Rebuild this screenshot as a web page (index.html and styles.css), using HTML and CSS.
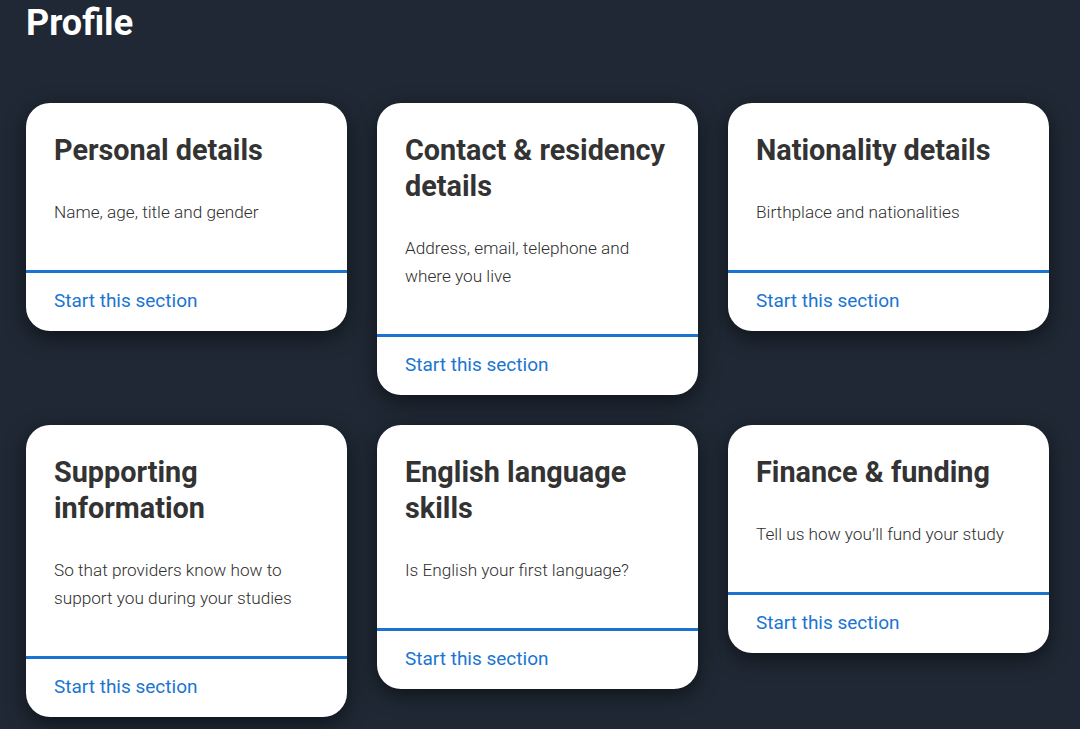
FILE: index.html
```html
<!DOCTYPE html>
<html lang="en">
<head>
<meta charset="utf-8">
<title>Profile</title>
<link rel="stylesheet" href="styles.css">
</head>
<body>
<main class="page">
  <h1 class="page-title">Profile</h1>
  <section class="grid">
    <article class="card">
      <div class="card-body">
        <h2 class="card-title">Personal details</h2>
        <p class="card-desc">Name, age, title and gender</p>
      </div>
      <div class="card-footer"><a class="card-link" href="#">Start this section</a></div>
    </article>
    <article class="card">
      <div class="card-body">
        <h2 class="card-title">Contact &amp; residency details</h2>
        <p class="card-desc">Address, email, telephone and where you live</p>
      </div>
      <div class="card-footer"><a class="card-link" href="#">Start this section</a></div>
    </article>
    <article class="card">
      <div class="card-body">
        <h2 class="card-title">Nationality details</h2>
        <p class="card-desc">Birthplace and nationalities</p>
      </div>
      <div class="card-footer"><a class="card-link" href="#">Start this section</a></div>
    </article>
    <article class="card">
      <div class="card-body">
        <h2 class="card-title">Supporting information</h2>
        <p class="card-desc">So that providers know how to support you during your studies</p>
      </div>
      <div class="card-footer"><a class="card-link" href="#">Start this section</a></div>
    </article>
    <article class="card">
      <div class="card-body">
        <h2 class="card-title">English language skills</h2>
        <p class="card-desc">Is English your first language?</p>
      </div>
      <div class="card-footer"><a class="card-link" href="#">Start this section</a></div>
    </article>
    <article class="card">
      <div class="card-body">
        <h2 class="card-title">Finance &amp; funding</h2>
        <p class="card-desc">Tell us how you’ll fund your study</p>
      </div>
      <div class="card-footer"><a class="card-link" href="#">Start this section</a></div>
    </article>
  </section>
</main>
</body>
</html>
```

FILE: styles.css
```css
html, body {
  margin: 0;
  padding: 0;
  background: #1f2834;
  height: 100%;
}
body {
  font-family: Roboto, "Liberation Sans", Arial, sans-serif;
  overflow: hidden;
}
.page {
  padding: 0 26px;
}
.page-title {
  margin: 0;
  padding-top: 3px;
  font-size: 36px;
  line-height: 40px;
  font-weight: 700;
  color: #ffffff;
}
.grid {
  margin-top: 60px;
  display: grid;
  grid-template-columns: repeat(3, 321px);
  column-gap: 30px;
  row-gap: 30px;
  align-items: start;
}
.card {
  background: #ffffff;
  border-radius: 24px;
  overflow: hidden;
  box-shadow: 0 6px 20px rgba(0, 0, 0, 0.5);
}
.card-body {
  padding: 29px 28px 0;
}
.card-title {
  margin: 0 0 30px;
  font-size: 28.8px;
  line-height: 36px;
  font-weight: 700;
  color: #333333;
}
.card-desc {
  margin: 0 0 44px;
  font-size: 17.2px;
  line-height: 28px;
  font-weight: 300;
  color: #2e2e2e;
}
.card-footer {
  border-top: 3px solid #1a73cf;
  padding: 14px 28px 16px;
}
.card-link {
  display: block;
  font-size: 19px;
  line-height: 28px;
  color: #1a75d2;
  text-decoration: none;
}
```
